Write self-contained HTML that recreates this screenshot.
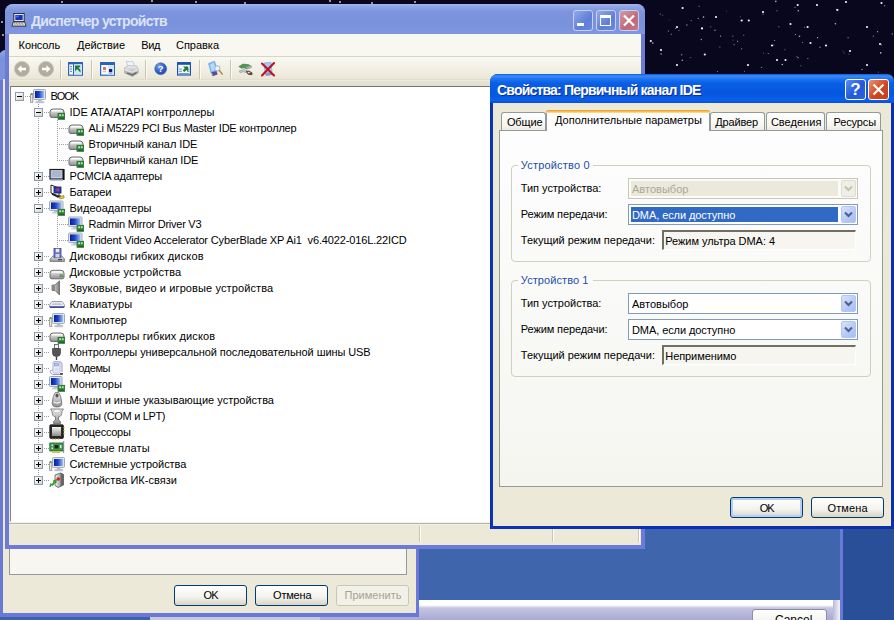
<!DOCTYPE html>
<html><head><meta charset="utf-8"><title>Диспетчер устройств</title>
<style>
html,body{margin:0;padding:0}
body{width:894px;height:620px;overflow:hidden;position:relative;background:#08071d;font:11px "Liberation Sans",sans-serif;color:#000}
.a{position:absolute}
.t{position:absolute;white-space:pre;line-height:14px;height:14px}
.ttl{position:absolute;white-space:pre;font-weight:bold;font-size:14px;line-height:16px;color:#fff}
.btn{position:absolute;box-sizing:border-box;border:1px solid #003c74;border-radius:3px;background:linear-gradient(#ffffff,#f3f2ec 60%,#d8d4c6)}
.cb{position:absolute;box-sizing:border-box;border:1px solid #7f9db9;background:#fff}
.cbb{position:absolute;box-sizing:border-box;border-radius:2px;border:1px solid #b4c5f5;background:linear-gradient(135deg,#d7e2fb,#b6c8f6 60%,#a9bdf3)}
.tab{position:absolute;box-sizing:border-box;border:1px solid #919b9c;border-bottom:none;border-radius:3px 3px 0 0;background:linear-gradient(#ffffff,#f7f6f1 70%,#ecebe4)}
.grp{position:absolute;box-sizing:border-box;border:1px solid #d0d0bf;border-radius:4px}
.exp{position:absolute;box-sizing:border-box;width:9px;height:9px;border:1px solid #8a9aaf;background:linear-gradient(135deg,#fff,#d8d4c8)}
.exp i{position:absolute;left:1px;top:3px;width:5px;height:1px;background:#000}
.exp b{position:absolute;left:3px;top:1px;width:1px;height:5px;background:#000}
.dh{position:absolute;height:1px;background:repeating-linear-gradient(90deg,#9c9c9c 0 1px,transparent 1px 2px)}
.dv{position:absolute;width:1px;background:repeating-linear-gradient(180deg,#9c9c9c 0 1px,transparent 1px 2px)}
</style></head><body>


<svg width="0" height="0" style="position:absolute"><defs>
<linearGradient id="gscr" x1="0" y1="0" x2="1" y2="0"><stop offset="0" stop-color="#0a1f9a"/><stop offset="0.45" stop-color="#1d46c8"/><stop offset="1" stop-color="#9fc0f0"/></linearGradient>
<linearGradient id="ggry" x1="0" y1="0" x2="0" y2="1"><stop offset="0" stop-color="#f4f4f4"/><stop offset="1" stop-color="#8e8e8e"/></linearGradient>
<linearGradient id="ggry2" x1="0" y1="0" x2="1" y2="0"><stop offset="0" stop-color="#f0f0f0"/><stop offset="1" stop-color="#7a7a7a"/></linearGradient>
<radialGradient id="ghelp" cx="0.35" cy="0.3" r="0.8"><stop offset="0" stop-color="#7fa4ec"/><stop offset="0.5" stop-color="#3563c4"/><stop offset="1" stop-color="#2248a8"/></radialGradient>
</defs></svg>

<svg class="a" style="left:0;top:0" width="894" height="620">
<circle cx="682.6" cy="8" r="1.1" fill="#fff" opacity="0.95"/>
<circle cx="716" cy="17" r="1.1" fill="#fff" opacity="0.95"/>
<circle cx="797.7" cy="5" r="1.1" fill="#fff" opacity="0.95"/>
<circle cx="837.4" cy="10" r="1.1" fill="#fff" opacity="0.95"/>
<circle cx="677" cy="27" r="1.1" fill="#fff" opacity="0.95"/>
<circle cx="702" cy="28.4" r="1.1" fill="#fff" opacity="0.95"/>
<circle cx="741.7" cy="20.5" r="1.1" fill="#fff" opacity="0.95"/>
<circle cx="748.8" cy="20.5" r="1.1" fill="#fff" opacity="0.95"/>
<circle cx="772" cy="45.5" r="1.1" fill="#fff" opacity="0.95"/>
<circle cx="704.8" cy="54.5" r="1.1" fill="#fff" opacity="0.95"/>
<circle cx="777" cy="60" r="1.1" fill="#fff" opacity="0.95"/>
<circle cx="785.5" cy="60" r="1.1" fill="#fff" opacity="0.95"/>
<circle cx="810.5" cy="43" r="1.1" fill="#fff" opacity="0.95"/>
<circle cx="826" cy="45.5" r="1.1" fill="#fff" opacity="0.95"/>
<circle cx="867" cy="27" r="1.1" fill="#fff" opacity="0.95"/>
<circle cx="880" cy="44" r="1.1" fill="#fff" opacity="0.95"/>
<circle cx="748" cy="65" r="1.1" fill="#fff" opacity="0.95"/>
<circle cx="677" cy="65" r="1.1" fill="#fff" opacity="0.95"/>
<circle cx="650.8" cy="41" r="1.1" fill="#fff" opacity="0.95"/>
<circle cx="661" cy="50" r="1.1" fill="#fff" opacity="0.95"/>
<circle cx="850" cy="51" r="1.1" fill="#fff" opacity="0.95"/>
<circle cx="867" cy="65" r="1.1" fill="#fff" opacity="0.95"/>
<circle cx="807.6" cy="27" r="1.1" fill="#fff" opacity="0.95"/>
<circle cx="790.5" cy="24" r="1.1" fill="#fff" opacity="0.95"/>
<circle cx="763" cy="12" r="1.1" fill="#fff" opacity="0.95"/>
<circle cx="817" cy="5" r="1.1" fill="#fff" opacity="0.95"/>
<circle cx="846" cy="2" r="1.1" fill="#fff" opacity="0.95"/>
<circle cx="881.5" cy="3" r="1.1" fill="#fff" opacity="0.95"/>
<circle cx="726.3" cy="11.0" r="0.5" fill="#fff" opacity="0.34"/>
<circle cx="778.9" cy="26.7" r="0.5" fill="#fff" opacity="0.75"/>
<circle cx="699.2" cy="6.3" r="0.8" fill="#fff" opacity="0.33"/>
<circle cx="668.5" cy="31.0" r="0.5" fill="#fff" opacity="0.77"/>
<circle cx="802.4" cy="42.6" r="0.5" fill="#fff" opacity="0.59"/>
<circle cx="744.4" cy="71.3" r="0.5" fill="#fff" opacity="0.58"/>
<circle cx="679.0" cy="30.6" r="0.5" fill="#fff" opacity="0.59"/>
<circle cx="784.9" cy="49.8" r="0.5" fill="#fff" opacity="0.59"/>
<circle cx="804.5" cy="27.2" r="0.5" fill="#fff" opacity="0.58"/>
<circle cx="799.5" cy="36.2" r="0.8" fill="#fff" opacity="0.69"/>
<circle cx="761.5" cy="67.4" r="0.7" fill="#fff" opacity="0.45"/>
<circle cx="843.0" cy="51.0" r="0.6" fill="#fff" opacity="0.34"/>
<circle cx="720.5" cy="36.1" r="0.7" fill="#fff" opacity="0.66"/>
<circle cx="717.4" cy="71.6" r="0.5" fill="#fff" opacity="0.56"/>
<circle cx="686.9" cy="25.0" r="0.8" fill="#fff" opacity="0.51"/>
<circle cx="884.6" cy="5.7" r="0.7" fill="#fff" opacity="0.47"/>
<circle cx="732.8" cy="36.3" r="0.8" fill="#fff" opacity="0.33"/>
<circle cx="669.2" cy="19.7" r="0.5" fill="#fff" opacity="0.33"/>
<circle cx="820.0" cy="47.2" r="0.8" fill="#fff" opacity="0.44"/>
<circle cx="741.7" cy="48.8" r="0.5" fill="#fff" opacity="0.77"/>
<circle cx="734.2" cy="44.6" r="0.8" fill="#fff" opacity="0.33"/>
<circle cx="836.5" cy="9.4" r="0.6" fill="#fff" opacity="0.50"/>
<circle cx="873.4" cy="36.2" r="0.6" fill="#fff" opacity="0.52"/>
<circle cx="782.3" cy="64.5" r="0.8" fill="#fff" opacity="0.73"/>
<circle cx="715.0" cy="30.3" r="0.7" fill="#fff" opacity="0.64"/>
<circle cx="740.3" cy="16.8" r="0.5" fill="#fff" opacity="0.39"/>
<circle cx="703.5" cy="17.0" r="0.8" fill="#fff" opacity="0.72"/>
<circle cx="691.2" cy="20.6" r="0.6" fill="#fff" opacity="0.51"/>
<circle cx="737.6" cy="41.3" r="0.6" fill="#fff" opacity="0.65"/>
<circle cx="773.8" cy="45.1" r="0.5" fill="#fff" opacity="0.53"/>
<circle cx="862.0" cy="69.5" r="0.8" fill="#fff" opacity="0.50"/>
<circle cx="743.7" cy="35.2" r="0.8" fill="#fff" opacity="0.33"/>
<circle cx="662.7" cy="15.2" r="0.6" fill="#fff" opacity="0.35"/>
<circle cx="795.0" cy="7.5" r="0.6" fill="#fff" opacity="0.57"/>
<circle cx="881.3" cy="44.8" r="0.5" fill="#fff" opacity="0.74"/>
<circle cx="798.3" cy="10.8" r="0.7" fill="#fff" opacity="0.78"/>
<circle cx="795.4" cy="34.6" r="0.5" fill="#fff" opacity="0.72"/>
<circle cx="892.3" cy="34.0" r="0.8" fill="#fff" opacity="0.46"/>
<circle cx="681.7" cy="54.7" r="0.7" fill="#fff" opacity="0.54"/>
<circle cx="817.6" cy="37.7" r="0.6" fill="#fff" opacity="0.78"/>
<circle cx="777.0" cy="10.7" r="0.5" fill="#fff" opacity="0.68"/>
<circle cx="719.9" cy="46.9" r="0.5" fill="#fff" opacity="0.65"/>
<circle cx="710.8" cy="26.8" r="0.6" fill="#fff" opacity="0.48"/>
<circle cx="701.3" cy="39.5" r="0.7" fill="#fff" opacity="0.62"/>
<circle cx="798.1" cy="57.6" r="0.6" fill="#fff" opacity="0.70"/>
<circle cx="848.9" cy="54.0" r="0.6" fill="#fff" opacity="0.40"/>
<circle cx="768.2" cy="53.4" r="0.5" fill="#fff" opacity="0.70"/>
<circle cx="763.1" cy="14.1" r="0.7" fill="#fff" opacity="0.52"/>
<circle cx="878.4" cy="72.1" r="0.7" fill="#fff" opacity="0.34"/>
<circle cx="671.3" cy="34.3" r="0.7" fill="#fff" opacity="0.40"/>
<circle cx="800.8" cy="65.7" r="0.5" fill="#fff" opacity="0.54"/>
<circle cx="807.9" cy="58.4" r="0.5" fill="#fff" opacity="0.72"/>
<circle cx="675.7" cy="28.4" r="0.6" fill="#fff" opacity="0.54"/>
<circle cx="690.3" cy="57.6" r="0.7" fill="#fff" opacity="0.34"/>
<circle cx="880.6" cy="52.7" r="0.8" fill="#fff" opacity="0.50"/>
<circle cx="880.8" cy="52.9" r="0.6" fill="#fff" opacity="0.80"/>
<circle cx="652.8" cy="43.1" r="0.8" fill="#fff" opacity="0.70"/>
<circle cx="682.3" cy="60.3" r="0.8" fill="#fff" opacity="0.63"/>
<circle cx="732.9" cy="40.1" r="0.6" fill="#fff" opacity="0.31"/>
<circle cx="844.2" cy="53.0" r="0.5" fill="#fff" opacity="0.56"/>
<circle cx="877.5" cy="31.7" r="0.6" fill="#fff" opacity="0.71"/>
<circle cx="698.3" cy="18.4" r="0.7" fill="#fff" opacity="0.55"/>
<circle cx="835.4" cy="23.8" r="0.8" fill="#fff" opacity="0.72"/>
<circle cx="661.1" cy="54.0" r="0.8" fill="#fff" opacity="0.63"/>
<circle cx="848.1" cy="37.7" r="0.6" fill="#fff" opacity="0.57"/>
<circle cx="775.8" cy="1.4" r="0.8" fill="#fff" opacity="0.69"/>
<circle cx="796.9" cy="56.7" r="0.6" fill="#fff" opacity="0.39"/>
<circle cx="763.4" cy="52.9" r="0.5" fill="#fff" opacity="0.46"/>
<circle cx="774.6" cy="40.5" r="0.5" fill="#fff" opacity="0.74"/>
<circle cx="660.1" cy="14.0" r="0.5" fill="#fff" opacity="0.69"/>
<circle cx="62" cy="2" r="0.9" fill="#fff" opacity="0.85"/>
<circle cx="152" cy="1" r="0.9" fill="#fff" opacity="0.85"/>
<circle cx="196" cy="2" r="0.9" fill="#fff" opacity="0.85"/>
<circle cx="245" cy="3" r="0.9" fill="#fff" opacity="0.85"/>
<circle cx="330" cy="1" r="0.9" fill="#fff" opacity="0.85"/>
<circle cx="340" cy="2" r="0.9" fill="#fff" opacity="0.85"/>
<circle cx="372" cy="3" r="0.9" fill="#fff" opacity="0.85"/>
<circle cx="415" cy="2" r="0.9" fill="#fff" opacity="0.85"/>
<circle cx="2" cy="22" r="0.9" fill="#fff" opacity="0.85"/>
<circle cx="3" cy="35" r="0.9" fill="#fff" opacity="0.85"/>
</svg>
<div class="a" style="left:0;top:520px;width:842px;height:80px;background:#3f65ad"></div>
<div class="a" style="left:843px;top:520px;width:51px;height:100px;background:#294f98"></div>
<div class="a" style="left:840px;top:520px;width:3px;height:100px;background:#6a78d8"></div>
<div class="a" style="left:0;top:600px;width:840px;height:20px;background:linear-gradient(#ffffff 0,#ffffff 5px,#c4c4e2 8px,#a9a9d2 20px)"></div>
<div class="a" style="left:833px;top:600px;width:7px;height:20px;background:linear-gradient(90deg,#b8b8da,#f4f4fb)"></div>
<div class="btn" style="left:752px;top:609px;width:75px;height:22px;border-color:#8a8ca8"></div>
<div class="t" style="left:775px;top:613px;font-size:12px">Cancel</div>
<div class="a" style="left:0;top:616px;width:150px;height:4px;background:#3d62aa"></div>
<div class="a" style="left:150px;top:616px;width:170px;height:4px;background:#c9c9de"></div>
<div class="a" style="left:-1px;top:50px;width:420px;height:567px;background:#6b79d6;border-radius:7px 7px 0 0"></div>
<div class="a" style="left:-1px;top:50px;width:420px;height:30px;background:linear-gradient(#8ea4e6,#7a92dc 30%,#7b93de);border-radius:7px 7px 0 0"></div>
<div class="a" style="left:3px;top:79px;width:413px;height:534px;background:#ece9d8"></div>
<div class="a" style="left:9px;top:110px;width:398px;height:465px;box-sizing:border-box;border:1px solid #919b9c;background:#f7f6f0"></div>
<div class="btn" style="left:174px;top:585px;width:73px;height:21px"></div>
<div class="btn" style="left:255px;top:585px;width:73px;height:21px"></div>
<div class="btn" style="left:336px;top:585px;width:73px;height:21px;border-color:#c9c7ba;background:#f2f1e8"></div>
<div class="t" style="left:203.4px;top:588px;letter-spacing:-0.703px;">OK</div>
<div class="t" style="left:273px;top:588px;letter-spacing:-0.178px;">Отмена</div>
<div class="t" style="left:344.5px;top:588px;letter-spacing:0.017px;color:#a5a294">Применить</div>
<div class="a" style="left:5px;top:4px;width:640px;height:545px;background:#6c7bd8;border-radius:8px 8px 0 0"></div>
<div class="a" style="left:5px;top:4px;width:640px;height:30px;background:linear-gradient(#a4b6ec 0,#8da3e4 3px,#7c94de 8px,#7a92dc 22px,#8098e2 30px);border-radius:8px 8px 0 0"></div>
<div class="ttl" style="left:31px;top:13px;letter-spacing:-0.668px;color:#dde3f6">Диспетчер устройств</div>
<svg class="a" style="left:11px;top:13px" width="16" height="14" viewBox="0 0 17 15.5" preserveAspectRatio="none"><rect x="3" y="0.6" width="11" height="9" fill="#e8ecf6" stroke="#222" stroke-width="1"/><rect x="4.6" y="2.2" width="7.8" height="5.6" fill="#1532c0"/><rect x="5.2" y="2.8" width="3" height="2" fill="#4a6ae8"/><path d="M2.5 10 L14.5 10 L16 14.5 L1 14.5 Z" fill="#f4f4f0" stroke="#222" stroke-width="0.9"/><path d="M3.5 11.5 L13.5 11.5 M3 13 L14 13" stroke="#555" stroke-width="0.8" stroke-dasharray="1 0.7"/></svg>
<div class="a" style="left:573px;top:10px;width:20px;height:21px;box-sizing:border-box;border:1px solid #c5d0f4;border-radius:3px;background:linear-gradient(135deg,#93a8ea,#5f7fd6 60%,#6b88dc)"></div>
<div class="a" style="left:596px;top:10px;width:20px;height:21px;box-sizing:border-box;border:1px solid #c5d0f4;border-radius:3px;background:linear-gradient(135deg,#93a8ea,#5f7fd6 60%,#6b88dc)"></div>
<div class="a" style="left:619px;top:10px;width:20px;height:21px;box-sizing:border-box;border:1px solid #c5d0f4;border-radius:3px;background:linear-gradient(135deg,#d19aa6,#c06a78 60%,#c77684)"></div>
<div class="a" style="left:577px;top:23px;width:7px;height:3px;background:#fff"></div>
<div class="a" style="left:600px;top:15px;width:11px;height:11px;box-sizing:border-box;border:1px solid #fff;border-top:3px solid #fff"></div>
<svg class="a" style="left:619px;top:10px" width="21" height="21"><path d="M5 5.5 L15 15.5 M15 5.5 L5 15.5" stroke="#fff" stroke-width="2.2"/></svg>
<div class="a" style="left:9px;top:34px;width:632px;height:511px;background:#ece9d8"></div>
<div class="a" style="left:9px;top:34px;width:632px;height:22px;background:#f8f7f0"></div>
<div class="a" style="left:9px;top:56px;width:632px;height:1px;background:#d8d5c4"></div>
<div class="a" style="left:9px;top:57px;width:632px;height:22px;background:linear-gradient(#f9f8f1,#f1efe3 60%,#e9e6d6)"></div>
<div class="a" style="left:9px;top:79px;width:632px;height:7px;background:linear-gradient(#cfcbb8 0,#f4f2e8 1px,#e6e3d2 2px,#e3dfcc 7px)"></div>
<div class="t" style="left:18.6px;top:38px;letter-spacing:-0.121px;">Консоль</div>
<div class="t" style="left:77px;top:38px;letter-spacing:-0.045px;">Действие</div>
<div class="t" style="left:141.3px;top:38px;letter-spacing:-0.402px;">Вид</div>
<div class="t" style="left:176px;top:38px;letter-spacing:-0.022px;">Справка</div>
<svg class="a" style="left:14px;top:61px" width="16" height="16" viewBox="0 0 16 16"><circle cx="8" cy="8" r="7.6" fill="#b1ad9e"/><circle cx="8" cy="8" r="7.6" fill="none" stroke="#c9c6b8" stroke-width="0.8"/><path d="M3.5 8 L7.5 4.2 L7.5 6.7 L12 6.7 L12 9.3 L7.5 9.3 L7.5 11.8 Z" fill="#fff"/></svg>
<svg class="a" style="left:38px;top:61px" width="16" height="16" viewBox="0 0 16 16"><circle cx="8" cy="8" r="7.6" fill="#b1ad9e"/><circle cx="8" cy="8" r="7.6" fill="none" stroke="#c9c6b8" stroke-width="0.8"/><g transform="translate(16,0) scale(-1,1)"><path d="M3.5 8 L7.5 4.2 L7.5 6.7 L12 6.7 L12 9.3 L7.5 9.3 L7.5 11.8 Z" fill="#fff"/></g></svg>
<svg class="a" style="left:67px;top:61px" width="16" height="16" viewBox="0 0 16 16"><rect x="1.6" y="1.6" width="13.8" height="12.6" fill="#fff" stroke="#2a63ba" stroke-width="1.2"/><rect x="1" y="1" width="15" height="2.4" fill="#2a63ba"/><rect x="6" y="3" width="1" height="11" fill="#2a63ba"/><g fill="#6f94d4"><rect x="3" y="5" width="2" height="1.3"/><rect x="3" y="7.4" width="2" height="1.3"/><rect x="3" y="9.8" width="2" height="1.3"/></g><rect x="7" y="3.4" width="7.8" height="10.2" fill="#cfe6fa"/><path d="M8 4.6 L13.2 4.6 L13.2 6.2 L11.4 6.2 L13.6 9.2 L13.4 11.6 L10 8 L8 10.4 Z" fill="#1c7d2c"/></svg>
<svg class="a" style="left:99px;top:61px" width="16" height="16" viewBox="0 0 16 16"><rect x="1.6" y="1.6" width="13.8" height="12.6" fill="#f4f9ff" stroke="#2a63ba" stroke-width="1.2"/><rect x="1" y="1" width="15" height="3" fill="#2a63ba"/><rect x="9" y="4" width="6" height="9.8" fill="#d4e6fa"/><rect x="4" y="6" width="3" height="3" fill="#d07a64"/><rect x="4" y="10.2" width="3" height="0.9" fill="#e0a898"/><rect x="10" y="8" width="3.2" height="3.2" fill="#10206a"/><rect x="10" y="12.2" width="3.2" height="0.9" fill="#8a9ad0"/></svg>
<svg class="a" style="left:123px;top:61px" width="16" height="16" viewBox="0 0 16 16"><path d="M3.2 0.6 L9.6 0.2 L11.8 5.4 L5.8 7 Z" fill="#eef4fc" stroke="#a8b4c8" stroke-width="0.6"/><path d="M1.4 7 L5.4 4.6 L13.6 5 L15.4 8.4 L15.2 12 L9.4 15.4 L1.6 12 Z" fill="url(#ggry)" stroke="#9aa0aa" stroke-width="0.6"/><path d="M1.6 8.6 L9.2 11.2 L15.2 8.6" fill="none" stroke="#f8f8f8" stroke-width="0.9"/><path d="M4 12 L9.4 14 L13.6 11.6" fill="none" stroke="#5a5e68" stroke-width="1.1"/></svg>
<svg class="a" style="left:153px;top:61px" width="16" height="16" viewBox="0 0 16 16"><circle cx="7.7" cy="7.7" r="6" fill="url(#ghelp)" stroke="#3a62b8" stroke-width="0.5"/><text x="7.7" y="11.3" text-anchor="middle" font-family="Liberation Sans, sans-serif" font-weight="bold" font-size="9.5" fill="#fff">?</text></svg>
<svg class="a" style="left:176px;top:61px" width="16" height="16" viewBox="0 0 16 16"><rect x="1.6" y="1.8" width="12.8" height="12.2" fill="#f6faff" stroke="#1d52ac" stroke-width="1.2"/><rect x="1" y="1.2" width="14" height="2.6" fill="#1d52ac"/><g fill="#5f86d0"><rect x="3" y="7.6" width="3" height="0.9"/><rect x="3" y="9.8" width="3" height="0.9"/><rect x="3" y="12" width="10" height="0.9"/><rect x="11" y="7.6" width="2.4" height="0.9"/><rect x="11" y="9.8" width="2.4" height="0.9"/></g><path d="M7 5.4 L12.2 5.4 L12.2 10.4 L10.5 8.9 L8.3 11 L6.6 9.4 L8.8 7.2 Z" fill="#17802a"/></svg>
<svg class="a" style="left:207px;top:61px" width="16" height="16" viewBox="0 0 16 16"><path d="M1.6 2.6 L7.6 0.2 L10.2 9.6 L4 11.6 Z" fill="#7fbdf0" stroke="#5a98d8" stroke-width="0.6"/><path d="M3 3.4 L6.8 1.8 L8.8 8.8 L4.8 10.2 Z" fill="#b4dcfa"/><path d="M3.4 11.6 L9.6 10 L10.6 13.4 L5.6 15.2 Z" fill="#5a4c9c"/><path d="M2.4 11 L5 14.6 L6 14.2 L3.6 10.8 Z" fill="#d8dcf0"/><circle cx="10.4" cy="7.4" r="2.6" fill="#eaf6ff" stroke="#9aa6c0" stroke-width="0.9"/><path d="M12.4 9.6 L15.2 13" stroke="#c09058" stroke-width="1.7" stroke-linecap="round"/></svg>
<svg class="a" style="left:238px;top:61px" width="16" height="16" viewBox="0 0 16 16"><path d="M0.8 5.6 L5 3 L10.4 3.6 L13.6 5.4 L9 8 L6 6.8 L3.4 7.2 Z" fill="#4f9a50" stroke="#2f7238" stroke-width="0.5"/><path d="M8 6 L13.6 4.6 L13.8 6.8 L9.6 8.6 Z" fill="#a8acb0"/><path d="M1 10 L5.6 8.4 L9.2 9.8 L8.6 11.8 L5.4 10.8 L2 11.8 Z" fill="#c4c6c8" stroke="#8a8c90" stroke-width="0.5"/><path d="M8.4 10.4 L11 10 L14.2 12 L13.8 13.8 L10 13.2 Z" fill="#6a4a34" stroke="#2a2420" stroke-width="0.6"/><path d="M9.4 11 L11 10.8 L12.6 11.8 L10.4 12.4 Z" fill="#e8dcc8"/></svg>
<svg class="a" style="left:260px;top:61px" width="16" height="16" viewBox="0 0 16 16"><path d="M4 2 L11 1.2 L12 11 L5 12 Z" fill="#a8c8f0" stroke="#7aa0d8" stroke-width="0.6"/><path d="M5 12.5 L11.5 11.6 L12 14 L6 15 Z" fill="#8a90c8"/><path d="M2 2.5 L14 14.5 M14 2 L2 14.5" stroke="#bd1020" stroke-width="2.1" stroke-linecap="round"/></svg>
<div class="a" style="left:60px;top:60px;width:1px;height:19px;background:#c9c6b5"></div><div class="a" style="left:61px;top:60px;width:1px;height:19px;background:#fbfaf5"></div>
<div class="a" style="left:91px;top:60px;width:1px;height:19px;background:#c9c6b5"></div><div class="a" style="left:92px;top:60px;width:1px;height:19px;background:#fbfaf5"></div>
<div class="a" style="left:145px;top:60px;width:1px;height:19px;background:#c9c6b5"></div><div class="a" style="left:146px;top:60px;width:1px;height:19px;background:#fbfaf5"></div>
<div class="a" style="left:199px;top:60px;width:1px;height:19px;background:#c9c6b5"></div><div class="a" style="left:200px;top:60px;width:1px;height:19px;background:#fbfaf5"></div>
<div class="a" style="left:230px;top:60px;width:1px;height:19px;background:#c9c6b5"></div><div class="a" style="left:231px;top:60px;width:1px;height:19px;background:#fbfaf5"></div>
<div class="a" style="left:10px;top:86px;width:630px;height:436px;box-sizing:border-box;border:1px solid #fff;border-top-color:#77776e;border-left-color:#85857c;background:#fff"></div>
<div class="a" style="left:9px;top:522px;width:632px;height:23px;background:linear-gradient(#f4f2e8 0,#f4f2e8 1px,#b9b6a6 1px,#b9b6a6 2px,#f1efe3 2px,#ece9d8 4px,#ece9d8 100%)"></div>
<div class="a" style="left:419px;top:526px;width:1px;height:16px;background:#c8c5b2"></div><div class="a" style="left:420px;top:526px;width:1px;height:16px;background:#fff"></div>
<div class="a" style="left:552px;top:526px;width:1px;height:16px;background:#c8c5b2"></div><div class="a" style="left:553px;top:526px;width:1px;height:16px;background:#fff"></div>
<div class="a" style="left:638px;top:526px;width:1px;height:16px;background:#c8c5b2"></div><div class="a" style="left:639px;top:526px;width:1px;height:16px;background:#fff"></div>
<div class="dv" style="left:38px;top:104px;height:377px"></div>
<div class="dv" style="left:57px;top:120px;height:41px"></div>
<div class="dv" style="left:57px;top:216px;height:33px"></div>
<div class="t" style="left:50.5px;top:89px;letter-spacing:-1.074px;">BOOK</div>
<div class="dh" style="left:25px;top:96px;width:5px"></div>
<svg class="a" style="left:30px;top:88px" width="16" height="16" viewBox="0 0 16 16"><rect x="0.6" y="6" width="2.2" height="8.5" fill="#e6e8e0" stroke="#8c9088" stroke-width="0.8"/><rect x="1" y="5.2" width="1.6" height="1.6" fill="#3aa03a"/><rect x="3.5" y="1.5" width="12" height="10" rx="1" fill="#dfe3ee" stroke="#a4aabc"/><rect x="5" y="3" width="9" height="7" fill="url(#gscr)"/><rect x="8" y="11.5" width="3.5" height="2" fill="#b8bcc8"/><rect x="5.5" y="13.4" width="8.5" height="1.4" rx="0.7" fill="#c8ccd8" stroke="#9aa0b4" stroke-width="0.5"/></svg>
<div class="exp" style="left:15px;top:92px"><i></i></div>
<div class="t" style="left:69.5px;top:105px;letter-spacing:0.038px;">IDE ATA/ATAPI контроллеры</div>
<div class="dh" style="left:44px;top:112px;width:5px"></div>
<svg class="a" style="left:49px;top:104px" width="16" height="16" viewBox="0 0 16 16"><path d="M1 8 Q1 5 4 5 L12 5 Q15 5 15 8 L15 12 Q15 13.5 13 13.5 L3 13.5 Q1 13.5 1 12 Z" fill="url(#ggry)" stroke="#6e6e6e" stroke-width="1"/><path d="M2.5 7.5 Q2.5 6 4.5 6 L11.5 6 Q13.5 6 13.5 7.5 Z" fill="#fbfbfb"/><g><rect x="9" y="9.3" width="6.6" height="6" fill="#38913f" stroke="#2a6a30" stroke-width="0.8"/><rect x="10.2" y="10.3" width="1.8" height="1.8" fill="#b8e8b0"/><rect x="13" y="10.3" width="1.6" height="1.8" fill="#b8e8b0"/><rect x="10" y="13.6" width="5" height="1" fill="#1d4a22"/></g></svg>
<div class="exp" style="left:34px;top:108px"><i></i></div>
<div class="t" style="left:88.5px;top:121px;letter-spacing:-0.217px;">ALi M5229 PCI Bus Master IDE контроллер</div>
<div class="dh" style="left:57px;top:128px;width:11px"></div>
<svg class="a" style="left:68px;top:120px" width="16" height="16" viewBox="0 0 16 16"><path d="M1 8 Q1 5 4 5 L12 5 Q15 5 15 8 L15 12 Q15 13.5 13 13.5 L3 13.5 Q1 13.5 1 12 Z" fill="url(#ggry)" stroke="#6e6e6e" stroke-width="1"/><path d="M2.5 7.5 Q2.5 6 4.5 6 L11.5 6 Q13.5 6 13.5 7.5 Z" fill="#fbfbfb"/><g><rect x="9" y="9.3" width="6.6" height="6" fill="#38913f" stroke="#2a6a30" stroke-width="0.8"/><rect x="10.2" y="10.3" width="1.8" height="1.8" fill="#b8e8b0"/><rect x="13" y="10.3" width="1.6" height="1.8" fill="#b8e8b0"/><rect x="10" y="13.6" width="5" height="1" fill="#1d4a22"/></g></svg>
<div class="t" style="left:88.5px;top:137px;letter-spacing:-0.082px;">Вторичный канал IDE</div>
<div class="dh" style="left:57px;top:144px;width:11px"></div>
<svg class="a" style="left:68px;top:136px" width="16" height="16" viewBox="0 0 16 16"><path d="M1 8 Q1 5 4 5 L12 5 Q15 5 15 8 L15 12 Q15 13.5 13 13.5 L3 13.5 Q1 13.5 1 12 Z" fill="url(#ggry)" stroke="#6e6e6e" stroke-width="1"/><path d="M2.5 7.5 Q2.5 6 4.5 6 L11.5 6 Q13.5 6 13.5 7.5 Z" fill="#fbfbfb"/><g><rect x="9" y="9.3" width="6.6" height="6" fill="#38913f" stroke="#2a6a30" stroke-width="0.8"/><rect x="10.2" y="10.3" width="1.8" height="1.8" fill="#b8e8b0"/><rect x="13" y="10.3" width="1.6" height="1.8" fill="#b8e8b0"/><rect x="10" y="13.6" width="5" height="1" fill="#1d4a22"/></g></svg>
<div class="t" style="left:88.5px;top:153px;letter-spacing:-0.127px;">Первичный канал IDE</div>
<div class="dh" style="left:57px;top:160px;width:11px"></div>
<svg class="a" style="left:68px;top:152px" width="16" height="16" viewBox="0 0 16 16"><path d="M1 8 Q1 5 4 5 L12 5 Q15 5 15 8 L15 12 Q15 13.5 13 13.5 L3 13.5 Q1 13.5 1 12 Z" fill="url(#ggry)" stroke="#6e6e6e" stroke-width="1"/><path d="M2.5 7.5 Q2.5 6 4.5 6 L11.5 6 Q13.5 6 13.5 7.5 Z" fill="#fbfbfb"/><g><rect x="9" y="9.3" width="6.6" height="6" fill="#38913f" stroke="#2a6a30" stroke-width="0.8"/><rect x="10.2" y="10.3" width="1.8" height="1.8" fill="#b8e8b0"/><rect x="13" y="10.3" width="1.6" height="1.8" fill="#b8e8b0"/><rect x="10" y="13.6" width="5" height="1" fill="#1d4a22"/></g></svg>
<div class="t" style="left:69.5px;top:169px;letter-spacing:-0.160px;">PCMCIA адаптеры</div>
<div class="dh" style="left:44px;top:176px;width:5px"></div>
<svg class="a" style="left:49px;top:168px" width="16" height="16" viewBox="0 0 16 16"><rect x="1" y="1.5" width="13" height="9.5" fill="#c9d2e4" stroke="#1a1a1a" stroke-width="1.2"/><rect x="2.5" y="3" width="10" height="6" fill="#aab6d0"/><rect x="14" y="1" width="1.6" height="11" fill="#111"/><rect x="1" y="11" width="13" height="1.5" fill="#8090b0"/></svg>
<div class="exp" style="left:34px;top:172px"><i></i><b></b></div>
<div class="t" style="left:69.5px;top:185px;letter-spacing:-0.117px;">Батареи</div>
<div class="dh" style="left:44px;top:192px;width:5px"></div>
<svg class="a" style="left:49px;top:184px" width="16" height="16" viewBox="0 0 16 16"><path d="M2 1 L2 9 L10 12 L10 4 Z" fill="#fff" stroke="#222" stroke-width="1"/><rect x="5" y="3" width="7" height="6" fill="#2a3fc0" stroke="#101a60" stroke-width="0.8"/><rect x="7.5" y="4.5" width="2.5" height="2.5" fill="#e03050"/><path d="M3 10 L9 13 L12 12" fill="none" stroke="#222" stroke-width="1.4"/><path d="M10 13 L15 11.5 L15 14 L11 15 Z" fill="#e8d040" stroke="#807010" stroke-width="0.6"/></svg>
<div class="exp" style="left:34px;top:188px"><i></i><b></b></div>
<div class="t" style="left:69.5px;top:201px;letter-spacing:0.014px;">Видеоадаптеры</div>
<div class="dh" style="left:44px;top:208px;width:5px"></div>
<svg class="a" style="left:49px;top:200px" width="16" height="16" viewBox="0 0 16 16"><rect x="0.5" y="1" width="13.5" height="9.5" rx="1" fill="#dfe3ee" stroke="#a4aabc"/><rect x="2" y="2.4" width="10.5" height="6.6" fill="url(#gscr)"/><rect x="5" y="10.5" width="4" height="1.6" fill="#b8bcc8"/><rect x="3" y="12" width="7.5" height="1.5" fill="#c8ccd8"/><g><rect x="9" y="9.3" width="6.6" height="6" fill="#38913f" stroke="#2a6a30" stroke-width="0.8"/><rect x="10.2" y="10.3" width="1.8" height="1.8" fill="#b8e8b0"/><rect x="13" y="10.3" width="1.6" height="1.8" fill="#b8e8b0"/><rect x="10" y="13.6" width="5" height="1" fill="#1d4a22"/></g></svg>
<div class="exp" style="left:34px;top:204px"><i></i></div>
<div class="t" style="left:88.5px;top:217px;letter-spacing:-0.251px;">Radmin Mirror Driver V3</div>
<div class="dh" style="left:57px;top:224px;width:11px"></div>
<svg class="a" style="left:68px;top:216px" width="16" height="16" viewBox="0 0 16 16"><rect x="0.5" y="1" width="13.5" height="9.5" rx="1" fill="#dfe3ee" stroke="#a4aabc"/><rect x="2" y="2.4" width="10.5" height="6.6" fill="url(#gscr)"/><rect x="5" y="10.5" width="4" height="1.6" fill="#b8bcc8"/><rect x="3" y="12" width="7.5" height="1.5" fill="#c8ccd8"/><g><rect x="9" y="9.3" width="6.6" height="6" fill="#38913f" stroke="#2a6a30" stroke-width="0.8"/><rect x="10.2" y="10.3" width="1.8" height="1.8" fill="#b8e8b0"/><rect x="13" y="10.3" width="1.6" height="1.8" fill="#b8e8b0"/><rect x="10" y="13.6" width="5" height="1" fill="#1d4a22"/></g></svg>
<div class="t" style="left:88.5px;top:233px;letter-spacing:-0.141px;">Trident Video Accelerator CyberBlade XP Ai1  v6.4022-016L.22ICD</div>
<div class="dh" style="left:57px;top:240px;width:11px"></div>
<svg class="a" style="left:68px;top:232px" width="16" height="16" viewBox="0 0 16 16"><rect x="0.5" y="1" width="13.5" height="9.5" rx="1" fill="#dfe3ee" stroke="#a4aabc"/><rect x="2" y="2.4" width="10.5" height="6.6" fill="url(#gscr)"/><rect x="5" y="10.5" width="4" height="1.6" fill="#b8bcc8"/><rect x="3" y="12" width="7.5" height="1.5" fill="#c8ccd8"/><g><rect x="9" y="9.3" width="6.6" height="6" fill="#38913f" stroke="#2a6a30" stroke-width="0.8"/><rect x="10.2" y="10.3" width="1.8" height="1.8" fill="#b8e8b0"/><rect x="13" y="10.3" width="1.6" height="1.8" fill="#b8e8b0"/><rect x="10" y="13.6" width="5" height="1" fill="#1d4a22"/></g></svg>
<div class="t" style="left:69.5px;top:249px;letter-spacing:0.184px;">Дисководы гибких дисков</div>
<div class="dh" style="left:44px;top:256px;width:5px"></div>
<svg class="a" style="left:49px;top:248px" width="16" height="16" viewBox="0 0 16 16"><path d="M1 11 L4 8 L13 8 L15.5 11 L15.5 13.5 L1 13.5 Z" fill="url(#ggry)" stroke="#777" stroke-width="0.8"/><rect x="5" y="0.5" width="7" height="9" fill="#6d78c4" stroke="#3c4590" stroke-width="0.8"/><rect x="6.8" y="0.8" width="3.4" height="3.4" fill="#e8ecf8"/><rect x="6.5" y="6" width="4" height="3.5" fill="#d0d4e8"/><rect x="9" y="11" width="4" height="1.2" fill="#444"/></svg>
<div class="exp" style="left:34px;top:252px"><i></i><b></b></div>
<div class="t" style="left:69.5px;top:265px;letter-spacing:0.103px;">Дисковые устройства</div>
<div class="dh" style="left:44px;top:272px;width:5px"></div>
<svg class="a" style="left:49px;top:264px" width="16" height="16" viewBox="0 0 16 16"><g transform="translate(0,1.3)"><path d="M1 8 Q1 5 4 5 L12 5 Q15 5 15 8 L15 12 Q15 13.5 13 13.5 L3 13.5 Q1 13.5 1 12 Z" fill="url(#ggry)" stroke="#6e6e6e" stroke-width="1"/><path d="M2.5 7.5 Q2.5 6 4.5 6 L11.5 6 Q13.5 6 13.5 7.5 Z" fill="#fbfbfb"/></g><rect x="11" y="10.8" width="2.5" height="2" fill="#5fc24a" stroke="#2f7f2a" stroke-width="0.5"/></svg>
<div class="exp" style="left:34px;top:268px"><i></i><b></b></div>
<div class="t" style="left:69.5px;top:281px;letter-spacing:0.115px;">Звуковые, видео и игровые устройства</div>
<div class="dh" style="left:44px;top:288px;width:5px"></div>
<svg class="a" style="left:49px;top:280px" width="16" height="16" viewBox="0 0 16 16"><path d="M3 5 L6 5 L10.5 0.8 L10.5 15 L6 10.5 L3 10.5 Z" fill="url(#ggry2)" stroke="#666" stroke-width="0.8"/><rect x="3" y="5" width="3" height="5.5" fill="#8a8a8a"/></svg>
<div class="exp" style="left:34px;top:284px"><i></i><b></b></div>
<div class="t" style="left:69.5px;top:297px;letter-spacing:0.153px;">Клавиатуры</div>
<div class="dh" style="left:44px;top:304px;width:5px"></div>
<svg class="a" style="left:49px;top:296px" width="16" height="16" viewBox="0 0 16 16"><path d="M3 5.5 L13 5.5 Q16 8 15.5 11 L0.5 11 Q0 8 3 5.5 Z" fill="#f2f2f6" stroke="#8088a8" stroke-width="0.8"/><path d="M0.6 10.2 L15.4 10.2 L15 12 L1 12 Z" fill="#3c50a0"/><g fill="#b0b4c8"><rect x="3.5" y="6.8" width="9" height="0.7"/><rect x="2.8" y="8.2" width="10.4" height="0.7"/></g></svg>
<div class="exp" style="left:34px;top:300px"><i></i><b></b></div>
<div class="t" style="left:69.5px;top:313px;letter-spacing:0.062px;">Компьютер</div>
<div class="dh" style="left:44px;top:320px;width:5px"></div>
<svg class="a" style="left:49px;top:312px" width="16" height="16" viewBox="0 0 16 16"><rect x="0.6" y="6" width="2.2" height="8.5" fill="#e6e8e0" stroke="#8c9088" stroke-width="0.8"/><rect x="1" y="5.2" width="1.6" height="1.6" fill="#3aa03a"/><rect x="3.5" y="1.5" width="12" height="10" rx="1" fill="#dfe3ee" stroke="#a4aabc"/><rect x="5" y="3" width="9" height="7" fill="url(#gscr)"/><rect x="8" y="11.5" width="3.5" height="2" fill="#b8bcc8"/><rect x="5.5" y="13.4" width="8.5" height="1.4" rx="0.7" fill="#c8ccd8" stroke="#9aa0b4" stroke-width="0.5"/></svg>
<div class="exp" style="left:34px;top:316px"><i></i><b></b></div>
<div class="t" style="left:69.5px;top:329px;letter-spacing:0.124px;">Контроллеры гибких дисков</div>
<div class="dh" style="left:44px;top:336px;width:5px"></div>
<svg class="a" style="left:49px;top:328px" width="16" height="16" viewBox="0 0 16 16"><path d="M1 8 Q1 5 4 5 L12 5 Q15 5 15 8 L15 12 Q15 13.5 13 13.5 L3 13.5 Q1 13.5 1 12 Z" fill="url(#ggry)" stroke="#6e6e6e" stroke-width="1"/><path d="M2.5 7.5 Q2.5 6 4.5 6 L11.5 6 Q13.5 6 13.5 7.5 Z" fill="#fbfbfb"/><g><rect x="9" y="9.3" width="6.6" height="6" fill="#38913f" stroke="#2a6a30" stroke-width="0.8"/><rect x="10.2" y="10.3" width="1.8" height="1.8" fill="#b8e8b0"/><rect x="13" y="10.3" width="1.6" height="1.8" fill="#b8e8b0"/><rect x="10" y="13.6" width="5" height="1" fill="#1d4a22"/></g></svg>
<div class="exp" style="left:34px;top:332px"><i></i><b></b></div>
<div class="t" style="left:69.5px;top:345px;letter-spacing:-0.083px;">Контроллеры универсальной последовательной шины USB</div>
<div class="dh" style="left:44px;top:352px;width:5px"></div>
<svg class="a" style="left:49px;top:344px" width="16" height="16" viewBox="0 0 16 16"><rect x="5.5" y="0.5" width="4" height="4" fill="#f0f0f0" stroke="#555" stroke-width="0.8"/><path d="M3.5 4.5 L11.5 4.5 L11.5 9 Q11.5 12.5 7.5 12.5 Q3.5 12.5 3.5 9 Z" fill="#555" stroke="#333" stroke-width="0.6"/><rect x="6.8" y="12.5" width="1.4" height="3.5" fill="#444"/></svg>
<div class="exp" style="left:34px;top:348px"><i></i><b></b></div>
<div class="t" style="left:69.5px;top:361px;letter-spacing:-0.445px;">Модемы</div>
<div class="dh" style="left:44px;top:368px;width:5px"></div>
<svg class="a" style="left:49px;top:360px" width="16" height="16" viewBox="0 0 16 16"><path d="M4 10 Q0 10 1.5 13 Q3 15 7 14.5 L13 14.5" fill="none" stroke="#a090d0" stroke-width="1"/><path d="M10 2 Q13 1 13 5 L13 12" fill="none" stroke="#a090d0" stroke-width="1"/><rect x="4" y="1.5" width="7" height="11.5" rx="1.5" fill="#f4f6fc" stroke="#98a0c0" stroke-width="0.8"/><rect x="5.5" y="3" width="4" height="3" fill="#a8c8f0" stroke="#6080c0" stroke-width="0.5"/><rect x="5.5" y="7.5" width="4" height="4" fill="#d8dcec"/><rect x="11" y="13" width="3" height="1.8" fill="#555"/></svg>
<div class="exp" style="left:34px;top:364px"><i></i><b></b></div>
<div class="t" style="left:69.5px;top:377px;letter-spacing:-0.048px;">Мониторы</div>
<div class="dh" style="left:44px;top:384px;width:5px"></div>
<svg class="a" style="left:49px;top:376px" width="16" height="16" viewBox="0 0 16 16"><rect x="0.5" y="0.5" width="12.5" height="10" rx="1" fill="#e4e8f2" stroke="#98a0b8"/><rect x="2" y="2" width="9.5" height="7" fill="url(#gscr)"/><rect x="4.5" y="10.5" width="4" height="1.6" fill="#b8bcc8"/><rect x="3" y="12" width="7" height="1.5" fill="#c8ccd8"/><g><rect x="9" y="9.3" width="6.6" height="6" fill="#38913f" stroke="#2a6a30" stroke-width="0.8"/><rect x="10.2" y="10.3" width="1.8" height="1.8" fill="#b8e8b0"/><rect x="13" y="10.3" width="1.6" height="1.8" fill="#b8e8b0"/><rect x="10" y="13.6" width="5" height="1" fill="#1d4a22"/></g></svg>
<div class="exp" style="left:34px;top:380px"><i></i><b></b></div>
<div class="t" style="left:69.5px;top:393px;letter-spacing:0.008px;">Мыши и иные указывающие устройства</div>
<div class="dh" style="left:44px;top:400px;width:5px"></div>
<svg class="a" style="left:49px;top:392px" width="16" height="16" viewBox="0 0 16 16"><path d="M6 0.8 Q8 -0.2 10 0.8 Q12 4 12.5 9 Q14 15 8 15 Q2 15 3.5 9 Q4 4 6 0.8 Z" fill="url(#ggry)" stroke="#666" stroke-width="0.8"/><ellipse cx="8" cy="3.5" rx="1.6" ry="2" fill="#555"/><path d="M4.5 10 Q8 12.5 11.5 10" fill="none" stroke="#fff" stroke-width="1"/></svg>
<div class="exp" style="left:34px;top:396px"><i></i><b></b></div>
<div class="t" style="left:69.5px;top:409px;letter-spacing:-0.331px;">Порты (COM и LPT)</div>
<div class="dh" style="left:44px;top:416px;width:5px"></div>
<svg class="a" style="left:49px;top:408px" width="16" height="16" viewBox="0 0 16 16"><path d="M1.5 1 L14.5 1 L13 3 Q13 8.5 9.5 9 L9.5 12 L11.5 13.5 L11.5 15.5 L4.5 15.5 L4.5 13.5 L6.5 12 L6.5 9 Q3 8.5 3 3 Z" fill="url(#ggry)" stroke="#6a6a6a" stroke-width="0.8"/><ellipse cx="8" cy="3.2" rx="3.6" ry="1.6" fill="#fafafa" stroke="#999" stroke-width="0.5"/></svg>
<div class="exp" style="left:34px;top:412px"><i></i><b></b></div>
<div class="t" style="left:69.5px;top:425px;letter-spacing:-0.260px;">Процессоры</div>
<div class="dh" style="left:44px;top:432px;width:5px"></div>
<svg class="a" style="left:49px;top:424px" width="16" height="16" viewBox="0 0 16 16"><rect x="0.8" y="0.8" width="13.6" height="13.6" rx="1" fill="#2c2a26" stroke="#111" stroke-width="0.8"/><rect x="3" y="3" width="9" height="9" fill="url(#ggry)"/><g fill="#c8a840"><rect x="14.4" y="3" width="1.2" height="1.2"/><rect x="14.4" y="6" width="1.2" height="1.2"/><rect x="14.4" y="9" width="1.2" height="1.2"/><rect x="3" y="14.4" width="1.2" height="1.2"/><rect x="6" y="14.4" width="1.2" height="1.2"/><rect x="9" y="14.4" width="1.2" height="1.2"/></g></svg>
<div class="exp" style="left:34px;top:428px"><i></i><b></b></div>
<div class="t" style="left:69.5px;top:441px;letter-spacing:0.103px;">Сетевые платы</div>
<div class="dh" style="left:44px;top:448px;width:5px"></div>
<svg class="a" style="left:49px;top:440px" width="16" height="16" viewBox="0 0 16 16"><rect x="14" y="1" width="1.2" height="12" fill="#999"/><rect x="0.8" y="3" width="13" height="8" fill="#3f9a52" stroke="#1f5f30" stroke-width="0.8"/><rect x="5.5" y="5" width="4" height="3.5" fill="#222"/><g fill="#d8f0d0"><rect x="2.5" y="4.5" width="1.5" height="1.5"/><rect x="2.5" y="7.5" width="1.5" height="1.5"/><rect x="11" y="5" width="1.5" height="3"/></g><rect x="3" y="11" width="8" height="2" fill="#d8c050"/></svg>
<div class="exp" style="left:34px;top:444px"><i></i><b></b></div>
<div class="t" style="left:69.5px;top:457px;letter-spacing:-0.061px;">Системные устройства</div>
<div class="dh" style="left:44px;top:464px;width:5px"></div>
<svg class="a" style="left:49px;top:456px" width="16" height="16" viewBox="0 0 16 16"><rect x="0.6" y="6" width="2.2" height="8.5" fill="#e6e8e0" stroke="#8c9088" stroke-width="0.8"/><rect x="1" y="5.2" width="1.6" height="1.6" fill="#3aa03a"/><rect x="3.5" y="1.5" width="12" height="10" rx="1" fill="#dfe3ee" stroke="#a4aabc"/><rect x="5" y="3" width="9" height="7" fill="url(#gscr)"/><rect x="8" y="11.5" width="3.5" height="2" fill="#b8bcc8"/><rect x="5.5" y="13.4" width="8.5" height="1.4" rx="0.7" fill="#c8ccd8" stroke="#9aa0b4" stroke-width="0.5"/></svg>
<div class="exp" style="left:34px;top:460px"><i></i><b></b></div>
<div class="t" style="left:69.5px;top:473px;letter-spacing:0.029px;">Устройства ИК-связи</div>
<div class="dh" style="left:44px;top:480px;width:5px"></div>
<svg class="a" style="left:49px;top:472px" width="16" height="16" viewBox="0 0 16 16"><path d="M6 3 L11.5 1 L14.5 2.5 L14.5 13 L9 15.5 L6 13.5 Z" fill="url(#ggry2)" stroke="#555" stroke-width="0.8"/><path d="M11.5 1 L14.5 2.5 L14.5 13 L11.5 14.5 Z" fill="#666"/><circle cx="9.3" cy="7" r="1.8" fill="#e02020"/><path d="M0.8 15 L1.5 11.5 L3 12.5 L5 9.5 L4 9 L7.5 7.5 L7 11 L6 10.3 L4 13.5 L2.5 13 Z" fill="#2db52d" stroke="#0f700f" stroke-width="0.5"/></svg>
<div class="exp" style="left:34px;top:476px"><i></i><b></b></div>
<div class="a" style="left:490px;top:74px;width:404px;height:455px;background:linear-gradient(90deg,#082a9c 0,#0c38c4 2px,#0b33b4 4px,#0b30ac 100%);border-radius:8px 7px 0 0"></div>
<div class="a" style="left:490px;top:74px;width:404px;height:29px;background:linear-gradient(#0a5be0 0,#3c8cf8 2px,#1f74f0 5px,#0a5fe6 9px,#0656df 20px,#0b60ea 26px,#0950d8 29px);border-radius:8px 7px 0 0"></div>
<div class="ttl" style="left:497px;top:82px;letter-spacing:-0.807px;text-shadow:1px 1px #0a2f9a;">Свойства: Первичный канал IDE</div>
<div class="a" style="left:845px;top:79px;width:21px;height:21px;box-sizing:border-box;border:1px solid #fff;border-radius:3px;background:linear-gradient(135deg,#5b8cf0,#2359d8 55%,#2a63e2)"></div>
<div class="a" style="left:845px;top:79px;width:21px;height:21px;text-align:center;line-height:22px;color:#fff;font-weight:bold;font-size:17px">?</div>
<div class="a" style="left:868px;top:79px;width:21px;height:21px;box-sizing:border-box;border:1px solid #fff;border-radius:3px;background:linear-gradient(135deg,#ec8f72,#d1461f 55%,#c63f1a)"></div>
<svg class="a" style="left:868px;top:79px" width="21" height="21"><path d="M5.5 5.5 L15.5 15.5 M15.5 5.5 L5.5 15.5" stroke="#fff" stroke-width="2.2"/></svg>
<div class="a" style="left:493px;top:103px;width:398px;height:423px;background:#ece9d8"></div>
<div class="a" style="left:499px;top:130px;width:384px;height:357px;box-sizing:border-box;border:1px solid #919b9c;background:linear-gradient(#fdfdfe,#f5f5f0)"></div>
<div class="tab" style="left:501px;top:112px;width:45px;height:18px"></div>
<div class="t" style="left:506.9px;top:115px;letter-spacing:-0.114px;">Общие</div>
<div class="tab" style="left:710px;top:112px;width:55px;height:18px"></div>
<div class="t" style="left:715.3px;top:115px;letter-spacing:-0.171px;">Драйвер</div>
<div class="tab" style="left:766px;top:112px;width:59px;height:18px"></div>
<div class="t" style="left:770.9px;top:115px;letter-spacing:0.029px;">Сведения</div>
<div class="tab" style="left:826px;top:112px;width:55px;height:18px"></div>
<div class="t" style="left:833.4px;top:115px;letter-spacing:-0.111px;">Ресурсы</div>
<div class="tab" style="left:546px;top:110px;width:164px;height:21px;background:#fdfdfe;border-top:none"><div class="a" style="left:-1px;top:0;width:164px;height:3px;background:linear-gradient(#e89a30,#fdc44a 60%,#fde4a8);border-radius:3px 3px 0 0"></div></div>
<div class="t" style="left:555px;top:113px;letter-spacing:0.003px;">Дополнительные параметры</div>
<div class="grp" style="left:511px;top:165px;width:360px;height:97px"></div>
<div class="a" style="left:518px;top:163px;width:75px;height:5px;background:#fcfcfd"></div>
<div class="t" style="left:520.8px;top:158px;letter-spacing:0.189px;color:#214ea6">Устройство 0</div>
<div class="t" style="left:520.8px;top:181px;letter-spacing:-0.035px;">Тип устройства:</div>
<div class="t" style="left:520.8px;top:207px;letter-spacing:-0.111px;">Режим передачи:</div>
<div class="t" style="left:520.8px;top:233px;letter-spacing:-0.016px;">Текущий режим передачи:</div>
<div class="cb" style="left:628px;top:178px;width:230px;height:21px;border-color:#c9c7ba;background:#fbfbf8"></div>
<div class="a" style="left:631px;top:181px;width:207px;height:15px;background:#ebe9dc"></div>
<div class="a" style="left:841px;top:180px;width:15px;height:17px;box-sizing:border-box;border:1px solid #dddcd0;border-radius:2px;background:#f0efe6"></div>
<svg class="a" style="left:841px;top:180px" width="15" height="17"><path d="M4 6.5 L7.5 10 L11 6.5" fill="none" stroke="#c2c1b4" stroke-width="2"/></svg>
<div class="t" style="left:632px;top:181.5px;letter-spacing:0.015px;color:#aca899">Автовыбор</div>
<div class="cb" style="left:628px;top:204px;width:230px;height:21px"></div>
<div class="cbb" style="left:841px;top:206px;width:15px;height:17px"></div>
<svg class="a" style="left:841px;top:206px" width="15" height="17"><path d="M4 6.5 L7.5 10 L11 6.5" fill="none" stroke="#4d6185" stroke-width="2"/></svg>
<div class="a" style="left:631px;top:207px;width:207px;height:15px;background:#316ac5"></div>
<div class="t" style="left:632px;top:207.5px;letter-spacing:-0.080px;color:#fff">DMA, если доступно</div>
<div class="a" style="left:662px;top:230px;width:194px;height:20px;box-sizing:border-box;border:1px solid #fff;border-top:2px solid #716f64;border-left:2px solid #716f64;background:#f6f5ef"></div>
<div class="t" style="left:665.3px;top:233.5px;letter-spacing:-0.044px;">Режим ультра DMA: 4</div>
<div class="grp" style="left:511px;top:280px;width:360px;height:97px"></div>
<div class="a" style="left:518px;top:278px;width:75px;height:5px;background:#fcfcfd"></div>
<div class="t" style="left:520.8px;top:273px;letter-spacing:0.080px;color:#214ea6">Устройство 1</div>
<div class="t" style="left:520.8px;top:296px;letter-spacing:-0.035px;">Тип устройства:</div>
<div class="t" style="left:520.8px;top:322px;letter-spacing:-0.111px;">Режим передачи:</div>
<div class="t" style="left:520.8px;top:348px;letter-spacing:-0.016px;">Текущий режим передачи:</div>
<div class="cb" style="left:628px;top:293px;width:230px;height:21px"></div>
<div class="cbb" style="left:841px;top:295px;width:15px;height:17px"></div>
<svg class="a" style="left:841px;top:295px" width="15" height="17"><path d="M4 6.5 L7.5 10 L11 6.5" fill="none" stroke="#4d6185" stroke-width="2"/></svg>
<div class="t" style="left:632px;top:296.5px;letter-spacing:0.015px;">Автовыбор</div>
<div class="cb" style="left:628px;top:319px;width:230px;height:21px"></div>
<div class="cbb" style="left:841px;top:321px;width:15px;height:17px"></div>
<svg class="a" style="left:841px;top:321px" width="15" height="17"><path d="M4 6.5 L7.5 10 L11 6.5" fill="none" stroke="#4d6185" stroke-width="2"/></svg>
<div class="t" style="left:632px;top:322.5px;letter-spacing:-0.080px;">DMA, если доступно</div>
<div class="a" style="left:662px;top:345px;width:194px;height:20px;box-sizing:border-box;border:1px solid #fff;border-top:2px solid #716f64;border-left:2px solid #716f64;background:#f6f5ef"></div>
<div class="t" style="left:665.3px;top:348.5px;letter-spacing:-0.080px;">Неприменимо</div>
<div class="btn" style="left:730px;top:497px;width:73px;height:21px;box-shadow:inset 0 0 0 2px #b4cdf5"></div>
<div class="btn" style="left:811px;top:497px;width:73px;height:21px"></div>
<div class="t" style="left:759.7px;top:501px;letter-spacing:-0.953px;">OK</div>
<div class="t" style="left:827.5px;top:501px;letter-spacing:0.122px;">Отмена</div>
</body></html>
